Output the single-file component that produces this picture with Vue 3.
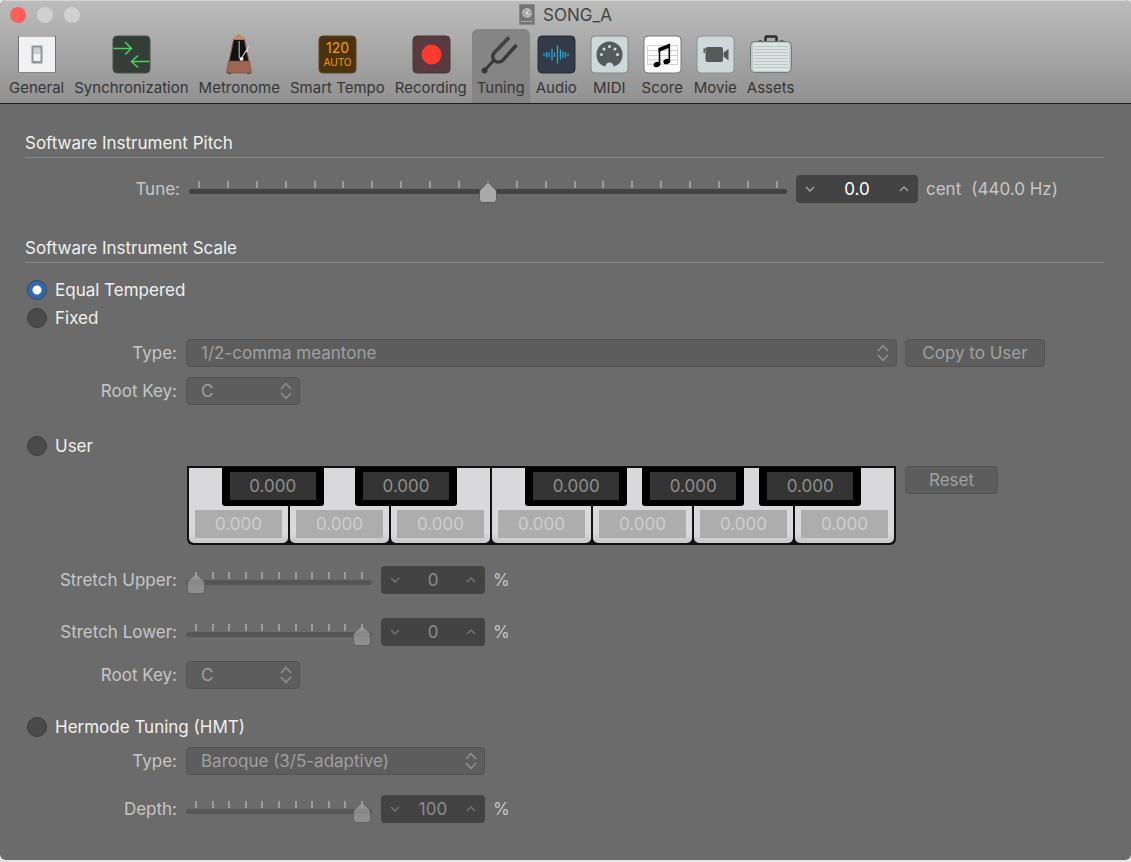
<script setup>
import { ref } from 'vue'

const tools = [
  { id: 'general', label: 'General' },
  { id: 'sync', label: 'Synchronization' },
  { id: 'metronome', label: 'Metronome' },
  { id: 'tempo', label: 'Smart Tempo' },
  { id: 'recording', label: 'Recording' },
  { id: 'tuning', label: 'Tuning' },
  { id: 'audio', label: 'Audio' },
  { id: 'midi', label: 'MIDI' },
  { id: 'score', label: 'Score' },
  { id: 'movie', label: 'Movie' },
  { id: 'assets', label: 'Assets' }
]

const activeTool = ref('tuning')
const scale = ref('equal')

const tune = ref('0.0')
const tunePosition = ref(0)
const whiteKeys = ['C', 'D', 'E', 'F', 'G', 'A', 'B']
// left offset of every black key, in percent of the keyboard width
const blackKeys = [
  { note: 'C sharp', left: 4.9 },
  { note: 'D sharp', left: 23.7 },
  { note: 'F sharp', left: 47.7 },
  { note: 'G sharp', left: 64.2 },
  { note: 'A sharp', left: 80.7 }
]
</script>

<template>
  <div class="window">
    <header class="header">
      <div class="titlebar">
        <div class="lights">
          <button class="light close" aria-label="Close"></button>
          <button class="light" aria-label="Minimize"></button>
          <button class="light" aria-label="Zoom"></button>
        </div>
        <h1 class="title">
          <svg width="16" height="22" viewBox="0 0 16 22">
            <rect x="0.5" y="0.5" width="15" height="20" fill="#747474" stroke="#8a8a8a" />
            <circle cx="8" cy="9" r="5" fill="#b5babb" />
            <path d="M8 9 L5 4.500 M8 9 L13 8 M8 9 L6 13.500 M8 9 L3.500 10" stroke="#8b9091" />
            <circle cx="8" cy="9" r="1.500" fill="#d5d9da" />
            <path d="M2 17.500 H14" stroke="#c4c4c4" stroke-dasharray="2 1" />
          </svg>
          <span>SONG_A</span>
        </h1>
      </div>

      <nav class="toolbar">
        <button
          v-for="tool in tools"
          :key="tool.id"
          class="tool"
          :class="{ active: activeTool === tool.id }"
          @click="activeTool = tool.id"
        >
          <svg class="tool-icon" width="44" height="40" viewBox="0 0 44 40">
            <g v-if="tool.id === 'general'">
              <rect x="3" y="2" width="38" height="36.500" fill="#6f7173" />
              <rect x="4" y="2.500" width="36" height="35.500" fill="#f1f1f4" />
              <rect x="16.500" y="11.500" width="11" height="18" rx="1" fill="#8c969c" />
              <rect x="18.500" y="13.500" width="7" height="7" fill="#c9d0d5" />
              <rect x="18.500" y="20" width="7" height="7" fill="#eef1f3" />
            </g>
            <g v-else-if="tool.id === 'sync'">
              <rect x="4" y="2" width="37" height="37" rx="4" fill="#343e37" stroke="#47504a" />
              <path
                d="M4.500 14.500 H22 M16 8 L22.500 14.500 L16 20.500 M40.500 27.500 H23 M29 21.500 L22.500 27.500 L29 33.500"
                fill="none" stroke="#41d65c" stroke-width="1.500"
              />
            </g>
            <g v-else-if="tool.id === 'metronome'">
              <path d="M16.500 5 L22 0.500 L27.500 5 L28 6 H16 Z" fill="#c98e6b" stroke="#8d593d" stroke-width="0.500" />
              <path d="M16 5.500 H28 L32.500 27 H11.500 Z" fill="#9b6248" />
              <path d="M17 6 H27 L31.500 27.500 H12.500 Z" fill="#111" />
              <path d="M21.500 7 H23 V24 H21.500 Z" fill="#8e8e86" />
              <path d="M24 25 L32 12" stroke="#d4d4d4" stroke-width="1.200" />
              <circle cx="24.500" cy="25" r="2" fill="#eee" />
              <path d="M29.500 17 L31 17.500" stroke="#ddd" stroke-width="2" />
              <path d="M11.500 27 H32.500 L34.500 39 H9.500 Z" fill="#9d6650" stroke="#7c4a38" stroke-width="0.600" />
              <path d="M11 39 H14 V40 H11 Z M30 39 H33 V40 H30 Z" fill="#5c3729" />
            </g>
            <g v-else-if="tool.id === 'tempo'">
              <rect x="4" y="2" width="37" height="37" rx="4" fill="#4b3310" stroke="#5d4522" />
              <text x="22.500" y="19" text-anchor="middle" font-size="14" fill="#f79a05">120</text>
              <text x="22.500" y="32" text-anchor="middle" font-size="10" fill="#f79a05">AUTO</text>
            </g>
            <g v-else-if="tool.id === 'recording'">
              <rect x="4" y="2" width="37" height="37" rx="4" fill="#573b3e" stroke="#493739" />
              <circle cx="22.500" cy="20.500" r="10" fill="#ff3b30" />
            </g>
            <g v-else-if="tool.id === 'tuning'" fill="none" stroke="#37393b" stroke-linecap="round">
              <path d="M30 3.500 L15.500 18.500 C10.500 24 17.500 31.500 23.500 26.500 L37.500 11" stroke-width="3.400" stroke-linecap="butt" />
              <path d="M15 26 L6 36" stroke-width="3" />
              <circle cx="5.500" cy="36.500" r="1.500" stroke-width="3" />
              <path d="M29 4.500 L15 19" stroke="#5b5d5f" stroke-width="0.800" />
            </g>
            <g v-else-if="tool.id === 'audio'">
              <rect x="4" y="2" width="37" height="37" rx="4" fill="#333b49" stroke="#262d39" />
              <path
                d="M10 20 V21.500 M12.500 18.500 V23 M15 19 V22.500 M18 15.500 V26 M20.500 19 V22.500 M23.500 12 V29 M26.500 16 V25 M29 18 V23.500 M31.500 18.500 V23 M34 20 V21.500"
                stroke="#2fa5d3" stroke-width="1.300" stroke-linecap="round"
              />
            </g>
            <g v-else-if="tool.id === 'midi'">
              <rect x="4" y="2" width="37" height="37" rx="4" fill="#ccd8d9" stroke="#7e8788" />
              <path
                d="M18.500 32.500 C12 31 9.500 26 9.500 20.500 A13 13 0 0 1 35.500 20.500 C35.500 26 33 31 26.500 32.500 C26.500 27 18.500 27 18.500 32.500 Z"
                fill="#525c5b"
              />
              <g fill="#d3dedf">
                <circle cx="14.500" cy="20.500" r="1.500" />
                <circle cx="17" cy="15" r="1.500" />
                <circle cx="22.500" cy="12.500" r="1.500" />
                <circle cx="28" cy="15" r="1.500" />
                <circle cx="30.500" cy="20.500" r="1.500" />
              </g>
            </g>
            <g v-else-if="tool.id === 'score'">
              <rect x="4" y="2" width="37" height="37" rx="4" fill="#fdfdfd" stroke="#777" />
              <path d="M7.500 11.500 H37.500 M7.500 16.500 H37.500 M7.500 21.500 H37.500 M7.500 26 H37.500 M7.500 30.500 H37.500 M7.500 11.500 V30.500 M37.500 11.500 V30.500" stroke="#d1d1d1" />
              <path d="M18.500 14 L30 9.500 V13.500 L18.500 18 Z" fill="#000" />
              <path d="M19.500 14 V30 M29.300 10 V27" stroke="#000" stroke-width="1.600" />
              <ellipse cx="17" cy="30.500" rx="3.500" ry="2.600" transform="rotate(-20 17 30.500)" />
              <ellipse cx="26.800" cy="27.500" rx="3.500" ry="2.600" transform="rotate(-20 26.800 27.500)" />
            </g>
            <g v-else-if="tool.id === 'movie'">
              <rect x="4" y="2" width="37" height="37" rx="4" fill="#ccd8d9" stroke="#8b9495" />
              <rect x="12.500" y="13" width="17.500" height="15" rx="2" fill="#525c5b" />
              <path d="M35.500 15 V26.500 L30.500 22.500 V18.500 Z M10.500 14.500 H13 V16 H12 V19 H10.500 Z" fill="#525c5b" />
            </g>
            <g v-else>
              <path d="M16.500 7 V3.500 Q16.500 2.500 17.500 2.500 H26.500 Q27.500 2.500 27.500 3.500 V7" fill="none" stroke="#292b2c" stroke-width="2.500" />
              <path d="M9.500 7 H13 M31 7 H34.500" stroke="#44494a" stroke-width="1.500" />
              <rect x="1.500" y="7.500" width="41" height="31" rx="4" fill="#bdc8c8" stroke="#717a7a" />
              <rect x="4" y="9" width="36" height="28" rx="2" fill="#dce4e3" />
              <path d="M5 12.500 H39 M5 15.500 H39 M5 18.500 H39 M5 21.500 H39 M5 24.500 H39 M5 27.500 H39 M5 30.500 H39 M5 33.500 H39" stroke="#bcc6c5" />
            </g>
          </svg>
          <span>{{ tool.label }}</span>
        </button>
      </nav>
    </header>

    <main class="content">
      <section>
        <h2 class="section-title">Software Instrument Pitch</h2>
        <div class="row tune-row">
          <label class="label" for="tune">Tune:</label>
          <div class="slider wide">
            <input id="tune" v-model="tunePosition" type="range" min="-100" max="100" />
            <div class="ticks"><i v-for="n in 21" :key="n"></i></div>
          </div>
          <div class="stepper tune-stepper">
            <button aria-label="Decrease tune">
              <svg width="10" height="6" viewBox="0 0 10 6"><path d="M1 1 L5 5 L9 1" /></svg>
            </button>
            <input v-model="tune" type="text" aria-label="Tune in cent" />
            <button aria-label="Increase tune">
              <svg width="10" height="6" viewBox="0 0 10 6"><path d="M1 5 L5 1 L9 5" /></svg>
            </button>
          </div>
          <div class="side unit"><span>cent</span><span>(440.0 Hz)</span></div>
        </div>
      </section>

      <section class="scale">
        <h2 class="section-title">Software Instrument Scale</h2>

        <label class="radio first"><input v-model="scale" type="radio" name="scale" value="equal" />Equal Tempered</label>
        <label class="radio fixed"><input v-model="scale" type="radio" name="scale" value="fixed" />Fixed</label>
        <div class="group fixed-group">
          <div class="row">
            <label class="label" for="fixed-type">Type:</label>
            <select id="fixed-type" class="select grow" disabled><option>1/2-comma meantone</option></select>
            <div class="side"><button class="button copy" disabled>Copy to User</button></div>
          </div>
          <div class="row">
            <label class="label" for="fixed-root">Root Key:</label>
            <select id="fixed-root" class="select key-select" disabled><option>C</option></select>
          </div>
        </div>

        <label class="radio user"><input v-model="scale" type="radio" name="scale" value="user" />User</label>
        <div class="row keyboard-row">
          <span class="label"></span>
          <div class="keyboard">
            <div v-for="note in whiteKeys" :key="note" class="white-key">
              <input type="text" value="0.000" :aria-label="note" disabled />
            </div>
            <div v-for="key in blackKeys" :key="key.note" class="black-key" :style="{ left: key.left + '%' }">
              <input type="text" value="0.000" :aria-label="key.note" disabled />
            </div>
          </div>
          <div class="side"><button class="button reset" disabled>Reset</button></div>
        </div>

        <div class="group stretch-group">
          <div class="row">
            <label class="label" for="upper">Stretch Upper:</label>
            <div class="slider small">
              <input id="upper" type="range" value="0" disabled />
              <div class="ticks"><i v-for="n in 11" :key="n"></i></div>
            </div>
            <div class="stepper disabled">
              <button aria-label="Decrease stretch upper" disabled>
                <svg width="10" height="6" viewBox="0 0 10 6"><path d="M1 1 L5 5 L9 1" /></svg>
              </button>
              <input type="text" value="0" aria-label="Stretch upper in percent" disabled />
              <button aria-label="Increase stretch upper" disabled>
                <svg width="10" height="6" viewBox="0 0 10 6"><path d="M1 5 L5 1 L9 5" /></svg>
              </button>
            </div>
            <span class="unit">%</span>
          </div>
          <div class="row">
            <label class="label" for="lower">Stretch Lower:</label>
            <div class="slider small">
              <input id="lower" type="range" value="100" disabled />
              <div class="ticks"><i v-for="n in 11" :key="n"></i></div>
            </div>
            <div class="stepper disabled">
              <button aria-label="Decrease stretch lower" disabled>
                <svg width="10" height="6" viewBox="0 0 10 6"><path d="M1 1 L5 5 L9 1" /></svg>
              </button>
              <input type="text" value="0" aria-label="Stretch lower in percent" disabled />
              <button aria-label="Increase stretch lower" disabled>
                <svg width="10" height="6" viewBox="0 0 10 6"><path d="M1 5 L5 1 L9 5" /></svg>
              </button>
            </div>
            <span class="unit">%</span>
          </div>
        </div>
        <div class="row user-root">
          <label class="label" for="user-root">Root Key:</label>
          <select id="user-root" class="select key-select" disabled><option>C</option></select>
        </div>

        <label class="radio hermode"><input v-model="scale" type="radio" name="scale" value="hermode" />Hermode Tuning (HMT)</label>
        <div class="group hermode-group">
          <div class="row">
            <label class="label" for="hmt-type">Type:</label>
            <select id="hmt-type" class="select type-select" disabled><option>Baroque (3/5-adaptive)</option></select>
          </div>
          <div class="row">
            <label class="label" for="depth">Depth:</label>
            <div class="slider small">
              <input id="depth" type="range" value="100" disabled />
              <div class="ticks"><i v-for="n in 11" :key="n"></i></div>
            </div>
            <div class="stepper disabled">
              <button aria-label="Decrease depth" disabled>
                <svg width="10" height="6" viewBox="0 0 10 6"><path d="M1 1 L5 5 L9 1" /></svg>
              </button>
              <input type="text" value="100" aria-label="Depth in percent" disabled />
              <button aria-label="Increase depth" disabled>
                <svg width="10" height="6" viewBox="0 0 10 6"><path d="M1 5 L5 1 L9 5" /></svg>
              </button>
            </div>
            <span class="unit">%</span>
          </div>
        </div>
      </section>
    </main>
  </div>
</template>

<style>
body {
  background: #e4e4e4;
}
</style>

<style scoped>
.window {
  box-sizing: border-box;
  min-height: calc(100vh - 2px);
  background: #6b6b6b;
  border-radius: 6px;
  overflow: hidden;
  font-family: Inter, Roboto, sans-serif;
  font-size: 17px;
  line-height: 20px;
  color: #f0f0f0;
}

.window *,
.window *::before {
  box-sizing: border-box;
}

button,
input,
select {
  margin: 0;
  padding: 0;
  border: none;
  background: none;
  font: inherit;
  color: inherit;
}

.header {
  background: linear-gradient(#bcbcbc, #919191);
  border-top: 1px solid #d6d6d6;
  border-bottom: 1px solid #1f1f1f;
  color: #363636;
}

.titlebar {
  display: grid;
  grid-template-columns: 1fr auto 1fr;
  align-items: center;
  height: 28px;
}

.lights {
  display: flex;
  gap: 11px;
  padding-left: 10px;
}

.light {
  width: 16px;
  height: 16px;
  border-radius: 50%;
  background: #d0d0d0;
}

.light.close {
  background: #ff5f57;
}

.title {
  display: flex;
  align-items: center;
  gap: 8px;
  margin: 0;
  font-size: 17px;
  font-weight: 400;
  color: #454545;
}

.toolbar {
  display: flex;
  padding-left: 4px;
}

.tool {
  display: flex;
  flex-direction: column;
  align-items: center;
  min-width: 53px;
  height: 74px;
  padding: 5px 5px 0;
  border-radius: 6px 6px 0 0;
  font-size: 15px;
  white-space: nowrap;
}

.tool span {
  margin-top: 4px;
}

.tool.active {
  background: #858585;
}

.tool-icon {
  flex: none;
  margin: 0 -2px;
}

.content {
  padding: 29px 27px 20px 25px;
}

.section-title {
  margin: 0;
  padding-bottom: 4px;
  border-bottom: 1px solid #898989;
  font-size: 17px;
  font-weight: 400;
}

.row {
  display: flex;
  align-items: center;
  gap: 8px;
}

.label {
  flex: none;
  width: 152px;
  margin-right: 1px;
  text-align: right;
  color: #c6c6c6;
}

.tune-row {
  margin-top: 17px;
}

.tune-row .label {
  width: 155px;
}

.side {
  flex: none;
  width: 199px;
}

.tune-row .side {
  display: flex;
  gap: 10px;
  width: 178px;
}

.unit {
  color: #c6c6c6;
}

.scale {
  margin-top: 35px;
}

.group {
  display: flex;
  flex-direction: column;
}

.slider {
  display: grid;
  height: 28px;
  margin-right: 1px;
}

.slider.wide {
  flex: 1;
}

.slider.small {
  width: 186px;
}

.slider > * {
  grid-area: 1 / 1;
}

.slider input {
  appearance: none;
  width: 100%;
  height: 28px;
}

.slider input::-webkit-slider-runnable-track {
  height: 5px;
  margin-top: 5px;
  border-radius: 3px;
  background: #434343;
}

.slider input::-webkit-slider-thumb {
  appearance: none;
  width: 20px;
  height: 23px;
  margin-top: -8px;
  background: url("data:image/svg+xml,%3Csvg xmlns='http://www.w3.org/2000/svg' width='20' height='23'%3E%3Cpath d='M10 1 L17 8 Q18.500 9.500 18.500 11 V18.500 Q18.500 21.500 15.500 21.500 H4.500 Q1.500 21.500 1.500 18.500 V11 Q1.500 9.500 3 8 Z' fill='%23a8a8a8' stroke='%23505050' stroke-width='0.800'/%3E%3C/svg%3E");
}

.slider input:disabled::-webkit-slider-runnable-track {
  background: #565656;
}

.slider input:disabled::-webkit-slider-thumb {
  background: url("data:image/svg+xml,%3Csvg xmlns='http://www.w3.org/2000/svg' width='20' height='23'%3E%3Cpath d='M10 1 L17 8 Q18.500 9.500 18.500 11 V18.500 Q18.500 21.500 15.500 21.500 H4.500 Q1.500 21.500 1.500 18.500 V11 Q1.500 9.500 3 8 Z' fill='%239a9a9a' fill-opacity='0.750' stroke='%23595959' stroke-width='0.800'/%3E%3C/svg%3E");
}

.ticks {
  display: flex;
  justify-content: space-between;
  height: 7px;
  margin: 6px 9px 0;
  pointer-events: none;
}

.ticks i {
  width: 2px;
  background: #9c9c9c;
}

.wide .ticks {
  z-index: 0;
}

.wide input {
  position: relative;
  z-index: 1;
}

.stepper {
  display: flex;
  flex: none;
  width: 104px;
  height: 28px;
  border-radius: 4px;
  background: #434343;
  color: #a0a0a0;
}

.tune-stepper {
  width: 122px;
}

.stepper button {
  flex: none;
  display: flex;
  align-items: center;
  justify-content: center;
  width: 28px;
}

.stepper path {
  fill: none;
  stroke: currentColor;
  stroke-width: 1.5;
}

.stepper input {
  flex: 1;
  width: 0;
  text-align: center;
  color: #fff;
}

.stepper.disabled,
.stepper.disabled button {
  color: #717171;
}

.stepper.disabled input {
  color: #8c8c8c;
}

.select {
  appearance: none;
  flex: none;
  height: 28px;
  padding: 0 28px 0 14px;
  border: 1px solid #545454;
  border-radius: 4px;
  background: #5d5d5d url("data:image/svg+xml,%3Csvg xmlns='http://www.w3.org/2000/svg' width='12' height='18' fill='none' stroke='%23919191' stroke-width='1.500'%3E%3Cpath d='M1 7 L6 1.500 L11 7 M1 11 L6 16.500 L11 11'/%3E%3C/svg%3E") no-repeat right 7px center;
  color: #a0a0a0;
  opacity: 1;
}

.select.grow {
  flex: 1;
  width: 0;
}

.key-select {
  width: 114px;
}

.type-select {
  width: 299px;
}

.button {
  height: 28px;
  border: 1px solid #545454;
  border-radius: 4px;
  background: #5d5d5d;
  color: #a0a0a0;
}

.button.copy {
  width: 140px;
}

.button.reset {
  width: 93px;
}

.radio {
  display: flex;
  align-items: center;
  gap: 8px;
  width: fit-content;
  padding-left: 2px;
}

.radio input {
  appearance: none;
  width: 20px;
  height: 20px;
  border: 1px solid #3c3c3c;
  border-radius: 50%;
  background: #4a4a4a;
}

.radio input:checked {
  border-color: #29476f;
  background: radial-gradient(circle, #fff 4px, #3168ab 5px);
}

.radio.first {
  margin-top: 17px;
}

.radio.fixed {
  margin-top: 8px;
}

.fixed-group {
  gap: 10px;
  margin-top: 11px;
}

.radio.user {
  margin-top: 31px;
}

.keyboard-row {
  align-items: flex-start;
  margin-top: 10px;
}

.keyboard {
  position: relative;
  flex: 1;
  display: flex;
  gap: 2px;
  margin: 0 1px;
  padding: 2px;
  border-radius: 0 0 6px 6px;
  background: #111;
}

.white-key {
  flex: 1;
  height: 75px;
  padding: 42px 6px 5px;
  border-radius: 0 0 5px 5px;
  background: linear-gradient(#d9d9db 85%, #c8c8ca);
}

.white-key input {
  width: 100%;
  height: 28px;
  background: #adadad;
  color: #cecece;
  text-align: center;
}

.black-key {
  position: absolute;
  top: 1px;
  width: 14.4%;
  padding: 5px 8px 6px;
  border-radius: 0 0 3px 3px;
  background: #000;
}

.black-key input {
  display: block;
  width: 100%;
  height: 28px;
  background: #343434;
  color: #8e8e8e;
  text-align: center;
}

.stretch-group {
  gap: 24px;
  margin-top: 21px;
}

.user-root {
  margin-top: 15px;
}

.radio.hermode {
  margin-top: 28px;
}

.hermode-group {
  gap: 20px;
  margin-top: 10px;
}
</style>
